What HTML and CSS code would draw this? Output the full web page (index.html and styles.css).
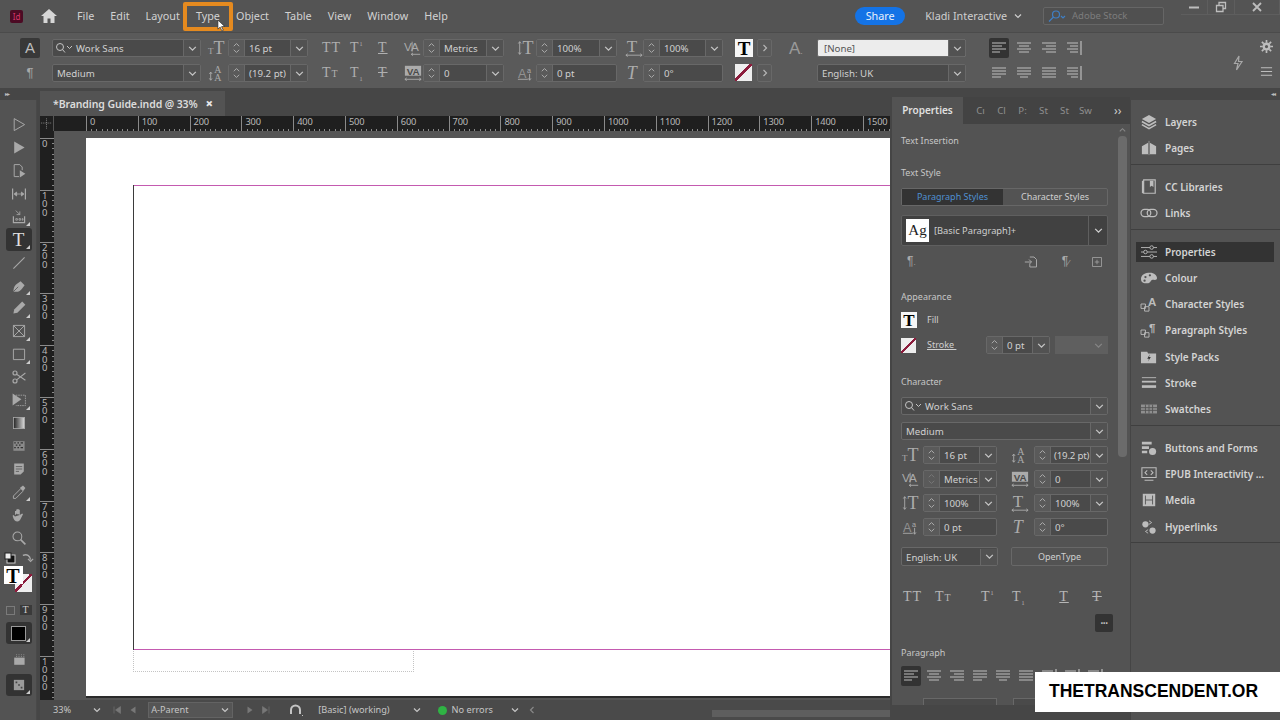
FILE: index.html
```html
<!DOCTYPE HTML>
<html lang="en">
  <head>
    <title>Branding Guide.indd @ 33%</title>
    <meta charset="utf-8">
    <link rel="stylesheet" href="styles.css">
  </head>
  <body>

  <svg class="sprite" width="0" height="0">
    <defs>
      <linearGradient id="grad" x1="0" x2="1" y1="0" y2="0"><stop offset="0" stop-color="#222"/><stop offset="1" stop-color="#ddd"/></linearGradient>
    </defs>
    <symbol id="chev" viewBox="0 0 10 10"><path d="M2 3.500l3 3 3-3" fill="none" stroke="currentColor" stroke-width="1.200"/></symbol>
    <symbol id="spin" viewBox="0 0 12 18"><path d="M3 7l3-3 3 3M3 11l3 3 3-3" fill="none" stroke="currentColor" stroke-width="1"/></symbol>
    <symbol id="right" viewBox="0 0 10 10"><path d="M3.500 2l3 3-3 3" fill="none" stroke="currentColor" stroke-width="1.200"/></symbol>
    <symbol id="al-l" viewBox="0 0 20 14"><path d="M3 2h14M3 5h10M3 8h14M3 11h8" stroke="currentColor" stroke-width="1.200"/></symbol>
    <symbol id="al-c" viewBox="0 0 20 14"><path d="M3 2h14M5 5h10M3 8h14M5 11h10" stroke="currentColor" stroke-width="1.200"/></symbol>
    <symbol id="al-r" viewBox="0 0 20 14"><path d="M3 2h14M7 5h10M3 8h14M7 11h10" stroke="currentColor" stroke-width="1.200"/></symbol>
    <symbol id="al-s" viewBox="0 0 20 14"><path d="M3 2h11M6 5h8M3 8h11M6 11h8M17 0v14" stroke="currentColor" stroke-width="1.200"/></symbol>
    <symbol id="al-j" viewBox="0 0 20 14"><path d="M3 2h14M3 5h14M3 8h14M3 11h9" stroke="currentColor" stroke-width="1.200"/></symbol>
    <symbol id="al-k" viewBox="0 0 20 14"><path d="M3 2h14M3 5h14M3 8h14M6 11h8" stroke="currentColor" stroke-width="1.200"/></symbol>
    <symbol id="al-a" viewBox="0 0 20 14"><path d="M3 2h14M3 5h14M3 8h14M3 11h14" stroke="currentColor" stroke-width="1.200"/></symbol>
    <symbol id="al-t" viewBox="0 0 20 14"><path d="M3 2h11M3 5h11M3 8h11M7 11h7M17 0v14" stroke="currentColor" stroke-width="1.200"/></symbol>
  </svg>

  <div class="app">

    <div class="menubar">
      <span class="app-icon">Id</span>
      <svg class="home" viewBox="0 0 18 16"><path d="M9 1L1 8h2.500v7h4v-4.500h3V15h4V8H17z" fill="currentColor"/></svg>
      <nav class="menu">
        <span>File</span><span>Edit</span><span>Layout</span>
        <span class="menu-hi">Type
          <svg class="cursor" viewBox="0 0 10 14"><path d="M1 1v10l2.500-2.200L5.500 13l1.500-.7-2-4 3.500-.3z" fill="#fff" stroke="#222" stroke-width=".7"/></svg>
        </span>
        <span>Object</span><span>Table</span><span>View</span><span>Window</span><span>Help</span>
      </nav>
      <span class="share">Share</span>
      <span class="user">Kladi Interactive</span>
      <svg class="user-chev"><use href="#chev"/></svg>
      <div class="stock">
        <svg class="stock-ic" viewBox="0 0 20 14"><circle cx="9" cy="5.500" r="3.500" fill="none" stroke="#3f7fc4" stroke-width="1.200"/><path d="M6.500 8L2 12.500M14 7l2 2 2-2" fill="none" stroke="#3f7fc4" stroke-width="1.200"/></svg>
        <span>Adobe Stock</span>
      </div>
      <div class="win">
        <span class="win-b"><svg viewBox="0 0 12 12"><path d="M1 6.500h10" stroke="currentColor" stroke-width="2"/></svg></span>
        <span class="win-b"><svg viewBox="0 0 12 12"><path d="M1.500 4.500h6.500v6H1.500zM4 4.500V1.500h6.500v6H8" fill="none" stroke="currentColor" stroke-width="1.300"/></svg></span>
        <span class="win-b win-x"><svg viewBox="0 0 12 12"><path d="M2 2l8 8M10 2l-8 8" stroke="currentColor" stroke-width="1.800"/></svg></span>
      </div>
    </div>

    <div class="control">
      <div class="col c-a">
        <span class="mode">A</span>
        <span class="para-mode">¶</span>
      </div>
      <div class="col c-font">
        <div class="box"><svg class="find" viewBox="0 0 20 12"><circle cx="5" cy="5" r="3.500" fill="none" stroke="currentColor"/><path d="M7.500 7.500L10 10.500M12 4l2.500 2.500L17 4" fill="none" stroke="currentColor"/></svg><span class="val">Work Sans</span><span class="dd"><svg><use href="#chev"/></svg></span></div>
        <div class="box"><span class="val">Medium</span><span class="dd"><svg><use href="#chev"/></svg></span></div>
      </div>
      <div class="col c-ic1">
        <svg class="ty" viewBox="0 0 22 20"><text x="1" y="17" font-size="10" class="st">T</text><text x="7" y="17" font-size="20" class="st">T</text></svg>
        <svg class="ty" viewBox="0 0 22 20"><path d="M4 9v9M2.500 11l1.500-2 1.500 2M2.500 16l1.500 2 1.500-2" fill="none" stroke="currentColor"/><text x="8" y="10" font-size="11" class="st">A</text><text x="8" y="19" font-size="11" class="st">A</text></svg>
      </div>
      <div class="col c-f1">
        <div class="box"><span class="sp"><svg><use href="#spin"/></svg></span><span class="val">16 pt</span><span class="dd"><svg><use href="#chev"/></svg></span></div>
        <div class="box"><span class="sp"><svg><use href="#spin"/></svg></span><span class="val">(19.2 pt)</span><span class="dd"><svg><use href="#chev"/></svg></span></div>
      </div>
      <div class="col c-let">
        <div class="letters"><span>TT</span><span>T<sup>1</sup></span><span class="ul">T</span></div>
        <div class="letters"><span>T<small>T</small></span><span>T<sub>1</sub></span><span class="st-through">T</span></div>
      </div>
      <div class="col c-ic2">
        <svg class="ty" viewBox="0 0 22 20"><text x="1" y="13" font-size="13" class="ss">VA</text><path d="M9 17h10M9 17l2-1.500M9 17l2 1.500M10 3v11" fill="none" stroke="currentColor"/></svg>
        <svg class="ty" viewBox="0 0 22 20"><rect x="2" y="2" width="18" height="11" fill="currentColor"/><text x="4" y="12" font-size="11" fill="#4a4a4a" class="sb">VA</text><path d="M2 17h18M2 17l2-1.500M2 17l2 1.500M20 17l-2-1.500M20 17l-2 1.500" fill="none" stroke="currentColor"/></svg>
      </div>
      <div class="col c-f2">
        <div class="box"><span class="sp"><svg><use href="#spin"/></svg></span><span class="val">Metrics</span><span class="dd"><svg><use href="#chev"/></svg></span></div>
        <div class="box"><span class="sp"><svg><use href="#spin"/></svg></span><span class="val">0</span><span class="dd"><svg><use href="#chev"/></svg></span></div>
      </div>
      <div class="col c-ic3">
        <svg class="ty" viewBox="0 0 22 20"><path d="M4 3v14M2.500 5l1.500-2 1.500 2M2.500 15l1.500 2 1.500-2" fill="none" stroke="currentColor"/><text x="7" y="17" font-size="20" class="st">T</text></svg>
        <svg class="ty" viewBox="0 0 22 20"><text x="2" y="16" font-size="14" class="ss" opacity=".7">A</text><text x="12" y="10" font-size="8" class="ss">a</text><path d="M2 17h11M15 11v7M13.500 16l1.500 2 1.500-2" fill="none" stroke="currentColor"/></svg>
      </div>
      <div class="col c-f2">
        <div class="box"><span class="sp"><svg><use href="#spin"/></svg></span><span class="val">100%</span><span class="dd"><svg><use href="#chev"/></svg></span></div>
        <div class="box"><span class="sp"><svg><use href="#spin"/></svg></span><span class="val">0 pt</span></div>
      </div>
      <div class="col c-ic4">
        <svg class="ty" viewBox="0 0 22 20"><text x="3" y="14" font-size="19" class="st">T</text><path d="M2 18h18M2 18l2-1.500M2 18l2 1.500M20 18l-2-1.500M20 18l-2 1.500" fill="none" stroke="currentColor"/></svg>
        <svg class="ty" viewBox="0 0 22 20"><text x="3" y="17" font-size="20" class="sti">T</text></svg>
      </div>
      <div class="col c-f3">
        <div class="box"><span class="sp"><svg><use href="#spin"/></svg></span><span class="val">100%</span><span class="dd"><svg><use href="#chev"/></svg></span></div>
        <div class="box"><span class="sp"><svg><use href="#spin"/></svg></span><span class="val">0°</span></div>
      </div>
      <div class="col c-sw">
        <span class="swatch-t">T</span>
        <span class="swatch-none"></span>
      </div>
      <div class="col c-ar">
        <span class="arrow-b"><svg><use href="#right"/></svg></span>
        <span class="arrow-b"><svg><use href="#right"/></svg></span>
      </div>
      <span class="c-big">A<small>.</small></span>
      <div class="col c-style">
        <div class="box none-box"><span class="val">[None]</span><span class="dd"><svg><use href="#chev"/></svg></span></div>
        <div class="box"><span class="val">English: UK</span><span class="dd"><svg><use href="#chev"/></svg></span></div>
      </div>
      <div class="col c-al">
        <div class="aligns"><span class="al al-on"><svg><use href="#al-l"/></svg></span><span class="al"><svg><use href="#al-c"/></svg></span><span class="al"><svg><use href="#al-r"/></svg></span><span class="al"><svg><use href="#al-s"/></svg></span></div>
        <div class="aligns"><span class="al"><svg><use href="#al-j"/></svg></span><span class="al"><svg><use href="#al-k"/></svg></span><span class="al"><svg><use href="#al-a"/></svg></span><span class="al"><svg><use href="#al-t"/></svg></span></div>
      </div>
      <svg class="bolt" viewBox="0 0 12 16"><path d="M7 1L2.500 8.500H6L4.500 15 10 6.500H6.500z" fill="none" stroke="currentColor" stroke-width="1.200"/></svg>
      <div class="col c-end">
        <svg viewBox="0 0 14 14"><circle cx="7" cy="7" r="3" fill="none" stroke="currentColor" stroke-width="2.500"/><path d="M7 0v3M7 11v3M0 7h3M11 7h3M2 2l2 2M10 10l2 2M12 2l-2 2M4 10l-2 2" stroke="currentColor" stroke-width="1.800"/></svg>
        <svg viewBox="0 0 14 14"><path d="M1 3h12M1 7h12M1 11h12" stroke="currentColor" stroke-width="1.100"/></svg>
      </div>
    </div>

    <div class="work">

      <div class="left">
        <div class="collapse">▸▸</div>
        <div class="tools">
          <span class="grip"></span>
          <span class="tool"><svg viewBox="0 0 20 20"><path d="M4 2l13 7.500-13 7.500z" fill="none" stroke="currentColor" stroke-width="1.200"/></svg></span>
          <span class="tool"><svg viewBox="0 0 20 20"><path d="M4 2l13 7.500-13 7.500z" fill="currentColor"/></svg></span>
          <span class="tool"><svg viewBox="0 0 20 20"><path d="M4 2h7l3 3v4M4 2v15h6" fill="none" stroke="currentColor" stroke-width="1.200"/><path d="M11 9l7 4.500-7 4.500z" fill="currentColor"/></svg></span>
          <span class="tool"><svg viewBox="0 0 20 20"><path d="M2 3v14M18 3v14" stroke="currentColor" stroke-width="1.500"/><path d="M4 10h12M4 10l3-2.500v5zM16 10l-3-2.500v5z" fill="currentColor" stroke="currentColor"/></svg></span>
          <span class="tool more"><svg viewBox="0 0 20 20"><path d="M3 9v8h14V9" fill="none" stroke="currentColor" stroke-width="1.500"/><path d="M6 12h2v2H6zM10 12h2v2h-2zM14 12h1v2h-1zM6 2l5 5M7 7h4V3" fill="none" stroke="currentColor"/></svg></span>
          <span class="tool tool-on more type-t">T</span>
          <span class="tool"><svg viewBox="0 0 20 20"><path d="M3 17L17 3" stroke="currentColor" stroke-width="1.300"/></svg></span>
          <span class="tool more"><svg viewBox="0 0 20 20"><path d="M3 17c0-5 2-8 5-10l4-3 5 5-3 4c-2 3-5 5-11 4z" fill="currentColor"/><path d="M3 17l6-6" stroke="#535353"/></svg></span>
          <span class="tool more"><svg viewBox="0 0 20 20"><path d="M3 17l1-5L14 2l4 4L8 16z" fill="currentColor"/></svg></span>
          <span class="tool more"><svg viewBox="0 0 20 20"><path d="M3 3h14v14H3zM3 3l14 14M17 3L3 17" fill="none" stroke="currentColor" stroke-width="1.200"/></svg></span>
          <span class="tool more"><svg viewBox="0 0 20 20"><path d="M3 4h14v13H3z" fill="none" stroke="currentColor" stroke-width="1.200"/></svg></span>
          <span class="tool"><svg viewBox="0 0 20 20"><circle cx="5" cy="5" r="2.500" fill="none" stroke="currentColor" stroke-width="1.500"/><circle cx="5" cy="15" r="2.500" fill="none" stroke="currentColor" stroke-width="1.500"/><path d="M7 6.500L18 14M7 13.500L18 5" stroke="currentColor" stroke-width="1.300"/></svg></span>
          <span class="tool more"><svg viewBox="0 0 20 20"><path d="M6 4h12v13H6" fill="none" stroke="currentColor" stroke-dasharray="2 1"/><path d="M2 2l11 7-11 8z" fill="currentColor"/></svg></span>
          <span class="tool"><svg viewBox="0 0 20 20"><rect x="3" y="3" width="14" height="14" fill="url(#grad)" stroke="#aaa"/></svg></span>
          <span class="tool"><svg viewBox="0 0 20 20"><rect x="3" y="4" width="14" height="12" fill="#8a8a8a"/><path d="M4 6h2M8 6h2M12 6h3M6 9h2M10 9h2M4 12h2M8 12h2M12 12h3" stroke="#333" stroke-width="1.500"/></svg></span>
          <span class="tool"><svg viewBox="0 0 20 20"><path d="M4 3h12v10l-4 4H4z" fill="currentColor"/><path d="M6 7h8M6 10h8M6 13h4" stroke="#535353"/></svg></span>
          <span class="tool more"><svg viewBox="0 0 20 20"><path d="M12 6L3 15v3h3l9-9" fill="none" stroke="currentColor" stroke-width="1.200"/><path d="M11 5l4-3 3 3-3 4z" fill="currentColor"/></svg></span>
          <span class="tool"><svg viewBox="0 0 20 20"><path d="M5 10V5h1.500v4M6.500 8V3H8v6M8 9V2.500h1.500V9M9.500 9V3.500H11V10M11 10l3-2 1 1-3 6c-1 2-2 3-4 3-3 0-4-2-5-4l-1-3 1-1 2 2z" fill="currentColor"/></svg></span>
          <span class="tool"><svg viewBox="0 0 20 20"><circle cx="8" cy="8" r="5.500" fill="none" stroke="currentColor" stroke-width="1.300"/><path d="M12 12l6 6" stroke="currentColor" stroke-width="2"/></svg></span>
          <div class="swaprow">
            <svg viewBox="0 0 12 12"><rect x="3" y="3" width="8" height="8" fill="#111" stroke="#ccc"/><rect x="1" y="1" width="6" height="6" fill="#eee" stroke="#222"/></svg>
            <svg viewBox="0 0 14 14"><path d="M1 4c5-2 8 0 9 5M7 8l3 3 3-3" fill="none" stroke="currentColor" stroke-width="1.500"/></svg>
          </div>
          <div class="fillstroke">
            <span class="fs-stroke"></span>
            <span class="fs-fill">T</span>
          </div>
          <div class="swaprow small">
            <span class="mini-box"></span>
            <span class="mini-t">T</span>
          </div>
          <span class="tool-on tool-box more"><span class="black-sq"></span></span>
          <span class="tool tool-plain"><svg viewBox="0 0 20 20"><rect x="4" y="7" width="13" height="9" fill="currentColor"/><path d="M7 3v3M10 3v3M13 3v3M16 3v3" stroke="currentColor" stroke-dasharray="1 1"/></svg></span>
          <span class="tool-on tool-box more view-box"><svg viewBox="0 0 14 14"><rect x="1" y="1" width="12" height="12" fill="#9a9a9a"/><path d="M3 3h2v2H3zM6 6h2v2H6zM9 9h2v2H9z" fill="#444"/></svg></span>
        </div>
      </div>

      <div class="doc">
        <div class="doc-tabs">
          <span class="doc-tab">*Branding Guide.indd @ 33%<b>×</b></span>
        </div>
        <div class="h-ruler">
          <span class="corner"><svg viewBox="0 0 14 15"><path d="M7 2v11M1 7h12" stroke="#8a8a8a" stroke-dasharray="1 1"/></svg></span>
          <span class="h-gap"></span>
          <span class="h-cell">0</span><span class="h-cell">100</span><span class="h-cell">200</span><span class="h-cell">300</span>
          <span class="h-cell">400</span><span class="h-cell">500</span><span class="h-cell">600</span><span class="h-cell">700</span>
          <span class="h-cell">800</span><span class="h-cell">900</span><span class="h-cell">1000</span><span class="h-cell">1100</span>
          <span class="h-cell">1200</span><span class="h-cell">1300</span><span class="h-cell">1400</span><span class="h-cell">1500</span>
        </div>
        <div class="doc-mid">
          <div class="v-ruler">
            <span class="v-gap"></span>
            <span class="v-cell">0</span>
            <span class="v-cell">1<br>0<br>0</span>
            <span class="v-cell">2<br>0<br>0</span>
            <span class="v-cell">3<br>0<br>0</span>
            <span class="v-cell">4<br>0<br>0</span>
            <span class="v-cell">5<br>0<br>0</span>
            <span class="v-cell">6<br>0<br>0</span>
            <span class="v-cell">7<br>0<br>0</span>
            <span class="v-cell">8<br>0<br>0</span>
            <span class="v-cell">9<br>0<br>0</span>
            <span class="v-cell">1<br>0<br>0<br>0</span>
          </div>
          <div class="board">
            <div class="page">
              <div class="margins"></div>
              <div class="slug"></div>
            </div>
          </div>
        </div>
        <div class="status">
          <span class="st-zoom">33%</span>
          <svg class="st-chev"><use href="#chev"/></svg>
          <svg class="st-nav first" viewBox="0 0 10 10"><path d="M2 1.500v7M8.500 1.500v7L3.500 5z" fill="#777" stroke="#777" stroke-width=".6"/></svg>
          <svg class="st-nav" viewBox="0 0 10 10"><path d="M7.500 1.500v7L2.500 5z" fill="#777"/></svg>
          <div class="st-page"><span>A-Parent</span><svg><use href="#chev"/></svg></div>
          <svg class="st-nav" viewBox="0 0 10 10"><path d="M2.500 1.500v7L7.500 5z" fill="#777"/></svg>
          <svg class="st-nav" viewBox="0 0 10 10"><path d="M1.500 1.500v7L6.500 5zM8 1.500v7" fill="#777" stroke="#777" stroke-width=".6"/></svg>
          <svg class="st-arc" viewBox="0 0 16 14"><path d="M2 11V7a4.500 4.500 0 0 1 9 0v4" fill="none" stroke="#c4c4c4" stroke-width="2"/><path d="M13.500 12v1" stroke="#c4c4c4"/></svg>
          <span class="st-prof">[Basic] (working)</span>
          <svg class="st-chev2"><use href="#chev"/></svg>
          <span class="st-dot"></span>
          <span class="st-err">No errors</span>
          <svg class="st-chev3"><use href="#chev"/></svg>
          <svg class="st-back"><use href="#right"/></svg>
          <span class="st-thumb"></span>
        </div>
      </div>

      <div class="panel-col">
        <div class="panel">
          <div class="panel-tabs">
            <span class="ptab-on">Properties</span>
            <span class="ptab">Cı</span><span class="ptab">Cl</span><span class="ptab">P:</span><span class="ptab">St</span><span class="ptab">St</span><span class="ptab">Sw</span>
            <span class="ptab-more">››</span>
          </div>
          <div class="panel-body">
            <div class="props">
              <div class="ph">Text Insertion</div>
              <div class="ph ph-ts">Text Style</div>
              <div class="seg"><span class="seg-on">Paragraph Styles</span><span>Character Styles</span></div>
              <div class="style-dd">
                <span class="ag">Ag</span>
                <span class="style-name">[Basic Paragraph]+</span>
                <span class="style-chev"><svg><use href="#chev"/></svg></span>
              </div>
              <div class="style-acts">
                <span class="pil">¶<small>.</small></span>
                <svg class="act a1" viewBox="0 0 18 16"><path d="M7 2h5l3 3v9H7v-3" fill="none" stroke="currentColor" stroke-width="1.200"/><path d="M1 8h8M6 5l3 3-3 3" fill="none" stroke="currentColor" stroke-width="1.200"/></svg>
                <span class="pil a2">¶<small>⁄</small></span>
                <svg class="act a3" viewBox="0 0 16 16"><path d="M2 2h12v12H2z" fill="none" stroke="currentColor"/><path d="M8 5v6M5 8h6" stroke="currentColor"/></svg>
              </div>

              <div class="ph ph-app">Appearance</div>
              <div class="row-fill"><span class="swatch-t small-sw">T</span><span class="lbl">Fill</span></div>
              <div class="row-stroke">
                <span class="swatch-none small-none"></span>
                <span class="lbl link">Stroke </span>
                <div class="box w64"><span class="sp"><svg><use href="#spin"/></svg></span><span class="val">0 pt</span><span class="dd"><svg><use href="#chev"/></svg></span></div>
                <div class="dis"><svg><use href="#chev"/></svg></div>
              </div>

              <div class="ph ph-char">Character</div>
              <div class="box full"><svg class="find" viewBox="0 0 20 12"><circle cx="5" cy="5" r="3.500" fill="none" stroke="currentColor"/><path d="M7.500 7.500L10 10.500M12 4l2.500 2.500L17 4" fill="none" stroke="currentColor"/></svg><span class="val">Work Sans</span><span class="dd"><svg><use href="#chev"/></svg></span></div>
              <div class="box full mt7"><span class="val">Medium</span><span class="dd"><svg><use href="#chev"/></svg></span></div>

              <div class="char-grid">
                <svg class="ty" viewBox="0 0 22 20"><text x="1" y="17" font-size="10" class="st">T</text><text x="7" y="17" font-size="20" class="st">T</text></svg>
                <div class="box"><span class="sp"><svg><use href="#spin"/></svg></span><span class="val">16 pt</span><span class="dd"><svg><use href="#chev"/></svg></span></div>
                <svg class="ty ty-r" viewBox="0 0 22 20"><path d="M4 9v9M2.500 11l1.500-2 1.500 2M2.500 16l1.500 2 1.500-2" fill="none" stroke="currentColor"/><text x="8" y="10" font-size="11" class="st">A</text><text x="8" y="19" font-size="11" class="st">A</text></svg>
                <div class="box"><span class="sp"><svg><use href="#spin"/></svg></span><span class="val tight">(19.2 pt)</span><span class="dd"><svg><use href="#chev"/></svg></span></div>

                <svg class="ty" viewBox="0 0 22 20"><text x="1" y="13" font-size="13" class="ss">VA</text><path d="M9 17h10M9 17l2-1.500M9 17l2 1.500M10 3v11" fill="none" stroke="currentColor"/></svg>
                <div class="box"><span class="sp sp-dim"><svg><use href="#spin"/></svg></span><span class="val">Metrics</span><span class="dd"><svg><use href="#chev"/></svg></span></div>
                <svg class="ty ty-r" viewBox="0 0 22 20"><rect x="2" y="2" width="18" height="11" fill="currentColor"/><text x="4" y="12" font-size="11" fill="#4a4a4a" class="sb">VA</text><path d="M2 17h18M2 17l2-1.500M2 17l2 1.500M20 17l-2-1.500M20 17l-2 1.500" fill="none" stroke="currentColor"/></svg>
                <div class="box"><span class="sp"><svg><use href="#spin"/></svg></span><span class="val">0</span><span class="dd"><svg><use href="#chev"/></svg></span></div>

                <svg class="ty" viewBox="0 0 22 20"><path d="M4 3v14M2.500 5l1.500-2 1.500 2M2.500 15l1.500 2 1.500-2" fill="none" stroke="currentColor"/><text x="7" y="17" font-size="20" class="st">T</text></svg>
                <div class="box"><span class="sp"><svg><use href="#spin"/></svg></span><span class="val">100%</span><span class="dd"><svg><use href="#chev"/></svg></span></div>
                <svg class="ty ty-r" viewBox="0 0 22 20"><text x="3" y="14" font-size="19" class="st">T</text><path d="M2 18h18M2 18l2-1.500M2 18l2 1.500M20 18l-2-1.500M20 18l-2 1.500" fill="none" stroke="currentColor"/></svg>
                <div class="box"><span class="sp"><svg><use href="#spin"/></svg></span><span class="val">100%</span><span class="dd"><svg><use href="#chev"/></svg></span></div>

                <svg class="ty" viewBox="0 0 22 20"><text x="2" y="16" font-size="14" class="ss" opacity=".7">A</text><text x="12" y="10" font-size="8" class="ss">a</text><path d="M2 17h11M15 11v7M13.500 16l1.500 2 1.500-2" fill="none" stroke="currentColor"/></svg>
                <div class="box"><span class="sp"><svg><use href="#spin"/></svg></span><span class="val">0 pt</span></div>
                <svg class="ty ty-r" viewBox="0 0 22 20"><text x="3" y="17" font-size="20" class="sti">T</text></svg>
                <div class="box"><span class="sp"><svg><use href="#spin"/></svg></span><span class="val">0°</span></div>
              </div>

              <div class="lang-row">
                <div class="box lang"><span class="val">English: UK</span><span class="dd"><svg><use href="#chev"/></svg></span></div>
                <span class="opentype">OpenType</span>
              </div>

              <div class="case-row">
                <span class="c1">TT</span><span class="c2">T<small>T</small></span><span class="c3">T<sup>1</sup></span><span class="c4">T<sub>1</sub></span><span class="c5 ul">T</span><span class="c6 st-through">T</span>
              </div>
              <div class="more-row"><span class="more-b">•••</span></div>

              <div class="ph ph-para">Paragraph</div>
              <div class="p-aligns">
                <span class="al al-on"><svg><use href="#al-l"/></svg></span><span class="al"><svg><use href="#al-c"/></svg></span><span class="al"><svg><use href="#al-r"/></svg></span><span class="al"><svg><use href="#al-j"/></svg></span><span class="al"><svg><use href="#al-k"/></svg></span><span class="al"><svg><use href="#al-a"/></svg></span><span class="al"><svg><use href="#al-t"/></svg></span><span class="al"><svg><use href="#al-s"/></svg></span><span class="al"><svg><use href="#al-s"/></svg></span>
              </div>
              <div class="p-indent"><span class="indent-box"></span><span class="indent-box"></span></div>
            </div>
            <div class="scroll">
              <svg class="scroll-up"><use href="#chev"/></svg>
              <span class="scroll-thumb"></span>
            </div>
          </div>
        </div>
      </div>

      <div class="dock-col">
        <div class="dock-top">◂◂</div>
        <div class="dock">
          <div class="dock-group g1">
            <div class="d-item"><svg viewBox="0 0 20 18"><path d="M10 1l8 4.500-8 4.500-8-4.500z" fill="currentColor"/><path d="M2 8.500l8 4.500 8-4.500M2 12l8 4.500 8-4.500" fill="none" stroke="currentColor" stroke-width="1.800"/></svg>Layers</div>
            <div class="d-item"><svg viewBox="0 0 20 18"><path d="M2 7l7-4v13H2zM11 3l7 4v9h-7z" fill="currentColor"/><path d="M10 1v16" stroke="currentColor" stroke-width=".7"/></svg>Pages</div>
          </div>
          <div class="dock-group g2">
            <div class="d-item"><svg viewBox="0 0 20 18"><path d="M2 2h2v14H2z" fill="currentColor"/><path d="M4 1h13v15H4z" fill="none" stroke="currentColor" stroke-width="1.300"/><path d="M11 2h4v7l-2-1.500L11 9z" fill="currentColor"/></svg>CC Libraries</div>
            <div class="d-item"><svg viewBox="0 0 20 18"><rect x="1" y="5" width="11" height="8" rx="4" fill="none" stroke="currentColor" stroke-width="1.400"/><rect x="8" y="5" width="11" height="8" rx="4" fill="none" stroke="currentColor" stroke-width="1.400"/></svg>Links</div>
          </div>
          <div class="dock-group g3">
            <div class="d-item d-on"><svg viewBox="0 0 20 18"><path d="M1 4h10M15 4h4M1 9h3M8 9h11M1 14h10M15 14h4" stroke="currentColor"/><circle cx="13" cy="4" r="2" fill="none" stroke="currentColor"/><circle cx="6" cy="9" r="2" fill="none" stroke="currentColor"/><circle cx="13" cy="14" r="2" fill="none" stroke="currentColor"/></svg>Properties</div>
            <div class="d-item"><svg viewBox="0 0 20 18"><path d="M1 10c0-5 5-7 10-7s8 3 8 6-3 2-5 2-2 4-6 4-7-1-7-5z" fill="currentColor"/><circle cx="6" cy="8" r="1.300" fill="#535353"/><circle cx="11" cy="6" r="1.300" fill="#535353"/><circle cx="5" cy="12" r="1.300" fill="#535353"/></svg>Colour</div>
            <div class="d-item"><svg viewBox="0 0 20 18"><path d="M1 9h5v5H1zM5 12h5v5H5z" fill="none" stroke="currentColor"/><text x="9" y="11" font-size="13" class="ss">A</text></svg>Character Styles</div>
            <div class="d-item"><svg viewBox="0 0 20 18"><path d="M1 9h5v5H1zM5 12h5v5H5z" fill="none" stroke="currentColor"/><text x="10" y="11" font-size="13" class="ss">¶</text></svg>Paragraph Styles</div>
            <div class="d-item"><svg viewBox="0 0 20 18"><path d="M1 3h7l1 2h9v11H1z" fill="currentColor"/><path d="M11 6l-3 5h2l-1 3 3-5h-2z" fill="#333"/></svg>Style Packs</div>
            <div class="d-item"><svg viewBox="0 0 20 18"><path d="M2 3h16" stroke="currentColor"/><path d="M2 7.500h16" stroke="currentColor" stroke-width="2"/><path d="M2 13h16" stroke="currentColor" stroke-width="3"/></svg>Stroke</div>
            <div class="d-item"><svg viewBox="0 0 20 18"><rect x="1" y="4" width="18" height="10" fill="#8f8f8f"/><path d="M1 7.500h18M1 10.500h18M6 4v10M10 4v10M14 4v10" stroke="#535353"/></svg>Swatches</div>
          </div>
          <div class="dock-group g4">
            <div class="d-item"><svg viewBox="0 0 20 18"><path d="M2 2h11v3H2zM2 7h8v3H2zM2 12h6v3H2z" fill="currentColor"/><circle cx="14" cy="13" r="4" fill="currentColor"/></svg>Buttons and Forms</div>
            <div class="d-item"><svg viewBox="0 0 20 18"><path d="M2 2h16v11H2z" fill="none" stroke="currentColor" stroke-width="1.200"/><path d="M8 5L5.500 7.500 8 10M12 5l2.500 2.500L12 10M5 16h10" fill="none" stroke="currentColor" stroke-width="1.200"/></svg>EPUB Interactivity ...</div>
            <div class="d-item"><svg viewBox="0 0 20 18"><rect x="3" y="2" width="14" height="14" fill="currentColor"/><path d="M6 4v10M14 4v10M6 9h8" stroke="#535353"/></svg>Media</div>
            <div class="d-item"><svg viewBox="0 0 20 18"><circle cx="6" cy="6" r="3.500" fill="currentColor"/><circle cx="14" cy="13" r="3.500" fill="currentColor"/><path d="M10 2l3 2-3 2M9 16l-3-2 3-2" fill="none" stroke="currentColor"/></svg>Hyperlinks</div>
          </div>
        </div>
      </div>
    </div>

    <div class="watermark">THETRANSCENDENT.OR</div>
  </div>

  </body>
</html>
```

FILE: styles.css
```css
html {
  height: 100%;
}
body {
  margin: 0;
  padding: 0;
  background: #535353;
  color: #cfcfcf;
  font-family: "Noto Sans", "Open Sans", sans-serif;
  font-size: 9.700px;
  line-height: 14px;
}

svg {
  display: block;
}
.sprite {
  position: absolute;
}
.st { font-family: "Liberation Serif", serif; fill: currentColor; }
.sti { font-family: "Liberation Serif", serif; font-style: italic; fill: currentColor; }
.ss { font-family: "Liberation Sans", sans-serif; fill: currentColor; }
.sb { font-family: "Liberation Sans", sans-serif; font-weight: bold; }

.app {
  position: relative;
  width: 1280px;
  height: 720px;
  overflow: hidden;
  display: flex;
  flex-direction: column;
}

/* menu bar */
.menubar {
  height: 32px;
  flex: none;
  display: flex;
  align-items: center;
  background: #545454;
  font-size: 10.800px;
  white-space: nowrap;
}
.app-icon {
  width: 13px;
  height: 13px;
  margin-left: 10px;
  border-radius: 2px;
  background: #4c0b24;
  color: #d8366c;
  font-size: 8px;
  line-height: 13px;
  text-align: center;
}
.home {
  width: 18px;
  height: 16px;
  margin-left: 17px;
  color: #d6d6d6;
}
.menu {
  display: flex;
  gap: 16px;
  margin-left: 19px;
  color: #d2d2d2;
}
.menu-hi {
  position: relative;
}
.menu-hi::after {
  content: "";
  position: absolute;
  left: -13px;
  right: -13px;
  top: -7px;
  bottom: -8px;
  border: 4px solid #e58a1f;
  border-radius: 2px;
}
.cursor {
  position: absolute;
  left: 21px;
  top: 10px;
  width: 9px;
  height: 13px;
  z-index: 2;
}
.share {
  width: 50px;
  height: 18px;
  margin-left: auto;
  border-radius: 9px;
  background: #1473e6;
  color: #e8f0fb;
  line-height: 18px;
  text-align: center;
}
.user {
  margin-left: 20px;
  color: #cfcfcf;
}
.user-chev {
  width: 10px;
  height: 10px;
  margin-left: 6px;
}
.stock {
  width: 121px;
  height: 18px;
  margin-left: 20px;
  display: flex;
  align-items: center;
  border: 1px solid #666;
  border-radius: 2px;
  box-sizing: border-box;
  background: #505050;
  color: #7d7d7d;
  font-size: 9.500px;
}
.stock-ic {
  width: 20px;
  height: 14px;
  margin: 0 5px 0 3px;
}
.win {
  display: flex;
  align-self: flex-start;
  margin-left: 17px;
  color: #bdbdbd;
}
.win-b {
  width: 27px;
  height: 15px;
  border: 1px solid #5e5e5e;
  border-top: 0;
  border-left: 0;
  display: flex;
  align-items: center;
  justify-content: center;
  box-sizing: border-box;
}
.win-b svg {
  width: 12px;
  height: 12px;
}
.win-x {
  width: 45px;
}

/* control panel */
.control {
  height: 56px;
  flex: none;
  box-sizing: border-box;
  padding: 6px 0 0 20px;
  display: flex;
  background: #5a5a5a;
  border-top: 1px solid #4b4b4b;
}
.col {
  display: flex;
  flex-direction: column;
  gap: 7px;
  flex: none;
}
.c-a { width: 20px; }
.c-font { width: 149px; margin-left: 12px; }
.c-ic1 { width: 22px; margin-left: 5px; }
.c-f1 { width: 80px; }
.c-let { width: 68px; margin-left: 14px; }
.c-ic2 { width: 20px; margin-left: 12px; }
.c-f2 { width: 81px; margin-left: 1px; }
.c-ic3 { width: 20px; margin-left: 11px; }
.c-ic4 { width: 20px; margin-left: 6px; }
.c-f3 { width: 80px; }
.c-sw { width: 18px; margin-left: 12px; }
.c-ar { width: 15px; margin-left: 4px; }
.c-big {
  width: 18px;
  margin-left: 17px;
  color: #9a9a9a;
  font: 17px/20px "Liberation Sans", sans-serif;
  flex: none;
}
.c-big small { font-size: 9px; }
.c-style { width: 149px; margin-left: 10px; }
.c-al { width: 96px; margin-left: 23px; }
.bolt {
  width: 12px;
  height: 16px;
  margin: 16px 0 0 147px;
  color: #a8a8a8;
}
.c-end {
  margin-left: 16px;
  gap: 11px;
  color: #bdbdbd;
}
.c-end svg {
  width: 13px;
  height: 13px;
  margin-top: 1px;
}
.mode {
  height: 20px;
  margin-top: -1px;
  background: #383838;
  border-radius: 2px;
  text-align: center;
  font: 15px/20px "Liberation Sans", sans-serif;
  color: #bdbdbd;
}
.para-mode {
  margin-top: -1px;
  height: 18px;
  text-align: center;
  font: 13px/18px "Liberation Sans", sans-serif;
  color: #a8a8a8;
}

.box {
  height: 18px;
  box-sizing: border-box;
  display: flex;
  align-items: center;
  border: 1px solid #686868;
  border-radius: 2px;
  background: #4a4a4a;
  color: #d0d0d0;
}
.val {
  flex: 1;
  padding: 2px 0 0 4px;
  white-space: nowrap;
  overflow: hidden;
}
.tight {
  letter-spacing: -.2px;
  padding-left: 3px;
}
.dd {
  width: 16px;
  height: 16px;
  flex: none;
  border-left: 1px solid #686868;
  background: #525252;
  display: flex;
  align-items: center;
  justify-content: center;
  color: #c4c4c4;
}
.dd svg {
  width: 11px;
  height: 11px;
}
.sp {
  width: 15px;
  height: 16px;
  flex: none;
  border-right: 1px solid #686868;
  background: #5a5a5a;
  color: #b4b4b4;
}
.sp svg {
  width: 15px;
  height: 16px;
}
.sp-dim {
  color: #7a7a7a;
}
.find {
  width: 20px;
  height: 12px;
  margin-left: 2px;
  flex: none;
  color: #c4c4c4;
}
.find + .val {
  padding-left: 1px;
}
.ty {
  width: 22px;
  height: 18px;
  color: #ababab;
  overflow: visible;
}
.letters {
  height: 18px;
  display: flex;
  gap: 10px;
  font: 14px/18px "Liberation Serif", serif;
  color: #b0b0b0;
}
.letters span {
  min-width: 18px;
  letter-spacing: 1px;
}
.letters small { font-size: 10px; }
sup, sub {
  font-size: 6px;
  line-height: 0;
}
.ul { text-decoration: underline; }
.st-through { text-decoration: line-through; }
.swatch-t {
  display: block;
  width: 18px;
  height: 18px;
  background: #f6f6f6;
  color: #000;
  text-align: center;
  font: bold 19px/19px "Liberation Serif", serif;
}
.swatch-none {
  display: block;
  width: 17px;
  height: 17px;
  background: linear-gradient(to top left, #eee 46%, #8c1c3c 46%, #8c1c3c 56%, #eee 56%);
}
.arrow-b {
  height: 18px;
  box-sizing: border-box;
  border: 1px solid #686868;
  border-radius: 2px;
  display: flex;
  align-items: center;
  justify-content: center;
  color: #b4b4b4;
}
.arrow-b svg {
  width: 10px;
  height: 10px;
}
.none-box {
  background: #ececec;
  color: #555;
}
.none-box .val {
  padding-left: 6px;
}
.aligns {
  display: flex;
  height: 18px;
  gap: 5px;
}
.al {
  width: 20px;
  height: 20px;
  flex: none;
  display: flex;
  align-items: center;
  justify-content: center;
  margin-top: -1px;
  color: #bdbdbd;
}
.al svg {
  width: 20px;
  height: 14px;
}
.al-on {
  background: #333;
  border-radius: 2px;
}

/* work area */
.work {
  flex: 1;
  display: flex;
  min-height: 0;
  background: #464646;
}
.left {
  width: 40px;
  flex: none;
  display: flex;
  flex-direction: column;
}
.collapse {
  height: 12px;
  padding-left: 5px;
  font-size: 6px;
  line-height: 12px;
  letter-spacing: -1px;
  color: #bdbdbd;
}
.tools {
  flex: 1;
  width: 37px;
  background: #535353;
  color: #a9a9a9;
  display: flex;
  flex-direction: column;
  align-items: center;
  box-shadow: inset -1px 0 0 #494949;
}
.grip {
  display: block;
  height: 13.500px;
}
.tool {
  position: relative;
  width: 26px;
  height: 22.940px;
  display: flex;
  align-items: center;
  justify-content: center;
  flex: none;
}
.tool svg {
  width: 16px;
  height: 16px;
}
.tool-on {
  background: #333;
  border-radius: 3px;
}
.more::after {
  content: "";
  position: absolute;
  right: 2px;
  bottom: 2px;
  border: 2px solid transparent;
  border-right-color: #ccc;
  border-bottom-color: #ccc;
}
.type-t {
  color: #e0e0e0;
  font: 19px/21px "Liberation Serif", serif;
}
.swaprow {
  width: 30px;
  height: 14px;
  margin-top: 2px;
  display: flex;
  justify-content: space-between;
  align-items: center;
}
.swaprow svg {
  width: 12px;
  height: 12px;
}
.swaprow.small {
  margin-top: 10px;
  width: 26px;
}
.fillstroke {
  position: relative;
  width: 30px;
  height: 27px;
  margin-top: 1px;
}
.fs-fill {
  position: absolute;
  left: 0;
  top: 0;
  width: 19px;
  height: 18px;
  background: #fff;
  color: #000;
  text-align: center;
  font: bold 20px/20px "Liberation Serif", serif;
}
.fs-stroke {
  position: absolute;
  left: 11px;
  top: 8px;
  width: 17px;
  height: 18px;
  background: linear-gradient(to top left, #eee 46%, #8c1c3c 46%, #8c1c3c 56%, #eee 56%);
}
.mini-box {
  width: 7px;
  height: 7px;
  border: 1px solid #7a7a7a;
}
.mini-t {
  width: 12px;
  height: 10px;
  background: #3a3a3a;
  text-align: center;
  font: 10px/10px "Liberation Serif", serif;
  color: #ccc;
}
.tool-box {
  position: relative;
  flex: none;
  width: 26px;
  height: 22px;
  margin-top: 5px;
  display: flex;
  align-items: center;
  justify-content: center;
}
.black-sq {
  width: 13px;
  height: 13px;
  background: #000;
  border: 1px solid #999;
}
.tool-plain {
  margin-top: 4px;
}
.view-box {
  margin-top: 3px;
}
.view-box svg {
  width: 12px;
  height: 12px;
}

/* document */
.doc {
  width: 850px;
  flex: none;
  display: flex;
  flex-direction: column;
}
.doc-tabs {
  height: 28px;
  flex: none;
  display: flex;
  align-items: flex-end;
}
.doc-tab {
  width: 185px;
  height: 25px;
  box-sizing: border-box;
  padding-left: 13px;
  background: #535353;
  color: #dcdcdc;
  font-size: 10.500px;
  line-height: 25px;
  font-weight: 600;
  letter-spacing: -.1px;
  white-space: nowrap;
}
.doc-tab b {
  margin-left: 8px;
  font-size: 13px;
  color: #e8e8e8;
}
.h-ruler {
  height: 15px;
  flex: none;
  display: flex;
  overflow: hidden;
  background: #1f1f1f;
  background-image: repeating-linear-gradient(to right, #8a8a8a 0, #8a8a8a 1px, transparent 1px, transparent 5.180px);
  background-size: 100% 2px;
  background-repeat: no-repeat;
  background-position: 46px bottom;
}
.corner {
  width: 14px;
  flex: none;
  border-right: 1px solid #555;
  box-sizing: border-box;
}
.corner svg {
  width: 13px;
  height: 15px;
}
.h-gap {
  width: 32px;
  flex: none;
}
.h-cell {
  width: 51.800px;
  flex: none;
  box-sizing: border-box;
  padding-left: 3px;
  border-left: 1px solid #8a8a8a;
  color: #b8b8b8;
  font-size: 9.300px;
  line-height: 12px;
  letter-spacing: -.2px;
}
.doc-mid {
  flex: 1;
  min-height: 0;
  display: flex;
}
.v-ruler {
  width: 14px;
  flex: none;
  overflow: hidden;
  background: #1f1f1f;
  background-image: repeating-linear-gradient(to bottom, #8a8a8a 0, #8a8a8a 1px, transparent 1px, transparent 5.180px);
  background-size: 2px 100%;
  background-repeat: no-repeat;
  background-position: right 7px;
  box-sizing: border-box;
}
.v-gap {
  display: block;
  height: 7px;
}
.v-cell {
  display: block;
  height: 51.800px;
  box-sizing: border-box;
  padding: 1px 0 0 2px;
  border-top: 1px solid #8a8a8a;
  color: #b8b8b8;
  font-size: 9.500px;
  line-height: 8.500px;
}
.board {
  flex: 1;
  position: relative;
  background: #565656;
  overflow: hidden;
}
.page {
  position: absolute;
  left: 32px;
  top: 7px;
  width: 804px;
  height: 558px;
  background: #fff;
  box-shadow: 0 2px 0 #2b2b2b;
}
.margins {
  position: absolute;
  left: 47px;
  top: 47px;
  right: 0;
  height: 465px;
  box-sizing: border-box;
  border-left: 1px solid #3b3b3b;
}
.margins::before,
.margins::after {
  content: "";
  position: absolute;
  left: 0;
  right: 0;
  height: 1px;
  background: #c45ab0;
}
.margins::before { top: 0; }
.margins::after { bottom: 0; }
.slug {
  position: absolute;
  left: 47px;
  top: 513px;
  width: 281px;
  height: 21px;
  box-sizing: border-box;
  border: 1px dotted #c4c4c4;
  border-top: 0;
}

.status {
  height: 20px;
  flex: none;
  display: flex;
  align-items: center;
  background: #4a4a4a;
  color: #c6c6c6;
  font-size: 9.200px;
}
.st-zoom { margin-left: 13px; }
.st-chev { width: 10px; height: 10px; margin-left: 21px; }
.st-nav { width: 10px; height: 10px; margin-left: 6px; }
.st-nav.first { margin-left: 10px; }
.st-page {
  width: 85px;
  height: 16px;
  margin: 0 6px 0 10px;
  box-sizing: border-box;
  border: 1px solid #636363;
  background: #555;
  display: flex;
  align-items: center;
  justify-content: space-between;
  padding: 0 2px;
}
.st-page svg { width: 10px; height: 10px; }
.st-arc { width: 16px; height: 14px; margin-left: 18px; }
.st-prof { margin-left: 13px; }
.st-chev2 { width: 10px; height: 10px; margin-left: 22px; }
.st-dot {
  width: 9px;
  height: 9px;
  margin-left: 16px;
  border-radius: 50%;
  background: #2fb344;
}
.st-err { margin-left: 5px; }
.st-chev3 { width: 10px; height: 10px; margin-left: 17px; }
.st-back { width: 10px; height: 10px; margin-left: 7px; transform: scaleX(-1); color: #888; }
.st-thumb {
  width: 178px;
  height: 7px;
  margin: 6px 0 0 auto;
  background: #5e5e5e;
}

/* properties panel */
.panel-col {
  width: 240px;
  flex: none;
  padding-top: 9px;
}
.panel {
  height: 608px;
  overflow: hidden;
  background: #535353;
  border-left: 2px solid #454545;
  box-sizing: border-box;
}
.panel-tabs {
  height: 27px;
  display: flex;
  align-items: center;
  background: #434343;
  color: #8f8f8f;
}
.ptab-on {
  width: 71px;
  height: 27px;
  background: #535353;
  color: #e0e0e0;
  font-weight: 600;
  text-align: center;
  line-height: 27px;
  font-size: 10px;
}
.ptab {
  width: 21px;
  text-align: center;
  flex: none;
}
.ptab-on + .ptab { margin-left: 7px; }
.ptab-more {
  margin-left: 18px;
  color: #cfcfcf;
  font-size: 12px;
}
.panel-body {
  display: flex;
}
.props {
  width: 207px;
  flex: none;
  margin-left: 9px;
  padding-top: 10px;
}
.ph {
  color: #c6c6c6;
  font-size: 9px;
}
.ph-ts { margin-top: 18px; }
.seg {
  margin-top: 8px;
  height: 18px;
  display: flex;
  box-sizing: border-box;
  border: 1px solid #676767;
  border-radius: 2px;
  text-align: center;
  font-size: 9px;
  line-height: 16px;
}
.seg span {
  flex: 1;
}
.seg .seg-on {
  flex: none;
  width: 101px;
  background: #333;
  color: #4f8fd0;
}
.style-dd {
  margin-top: 9px;
  height: 31px;
  box-sizing: border-box;
  padding-left: 4px;
  display: flex;
  align-items: center;
  background: #414141;
  border: 1px solid #5f5f5f;
  border-radius: 2px;
}
.ag {
  width: 23px;
  height: 23px;
  background: #fff;
  color: #222;
  text-align: center;
  font: 15px/22px "Liberation Serif", serif;
}
.style-name {
  flex: 1;
  margin-left: 5px;
  font-size: 9.300px;
}
.style-chev {
  width: 18px;
  height: 29px;
  border-left: 1px solid #5f5f5f;
  display: flex;
  align-items: center;
  justify-content: center;
}
.style-chev svg { width: 11px; height: 11px; }
.style-acts {
  margin-top: 7px;
  height: 18px;
  display: flex;
  align-items: center;
  color: #a9a9a9;
}
.pil {
  margin-left: 6px;
  font: 12px/18px "Liberation Sans", sans-serif;
}
.pil small { font-size: 8px; }
.act {
  width: 15px;
  height: 14px;
}
.a1 { margin-left: 108px; }
.pil.a2 { margin-left: 23px; }
.a3 { margin-left: 22px; width: 12px; height: 12px; }
.ph-app { margin-top: 19px; }
.row-fill {
  margin-top: 8px;
  height: 16px;
  display: flex;
  align-items: center;
}
.small-sw {
  width: 16px;
  height: 16px;
  font-size: 17px;
  line-height: 17px;
}
.lbl {
  margin-left: 10px;
  font-size: 9px;
}
.row-stroke {
  margin-top: 8px;
  height: 18px;
  display: flex;
  align-items: center;
}
.small-none {
  width: 15px;
  height: 15px;
}
.lbl.link {
  margin-left: 11px;
  width: 59px;
  flex: none;
  text-decoration: underline;
  white-space: pre;
}
.w64 { width: 64px; }
.dis {
  width: 53px;
  height: 18px;
  margin-left: 5px;
  background: #5f5f5f;
  display: flex;
  align-items: center;
  justify-content: flex-end;
  padding-right: 4px;
  box-sizing: border-box;
  color: #858585;
}
.dis svg { width: 11px; height: 11px; }
.ph-char { margin-top: 21px; }
.ph-char + .box { margin-top: 8px; }
.mt7 { margin-top: 7px; }
.char-grid {
  margin-top: 6px;
  display: grid;
  grid-template-columns: 22px 74px 37px 74px;
  row-gap: 6.100px;
}
.char-grid .ty {
  width: 20px;
}
.char-grid .ty-r {
  margin-left: 13px;
}
.lang-row {
  margin-top: 11px;
  height: 19px;
  display: flex;
  justify-content: space-between;
}
.box.lang { width: 97px; height: 19px; }
.opentype {
  width: 97px;
  box-sizing: border-box;
  border: 1px solid #686868;
  border-radius: 2px;
  text-align: center;
  font-size: 9px;
  line-height: 17px;
}
.case-row {
  margin-top: 22px;
  height: 18px;
  display: flex;
  font: 14px/18px "Liberation Serif", serif;
  color: #b6b6b6;
}
.case-row small { font-size: 10px; }
.case-row span { flex: none; width: 18px; letter-spacing: 1px; }
.case-row .c1 { margin-left: 2px; }
.case-row .c2 { margin-left: 14px; }
.case-row .c3 { margin-left: 28px; }
.case-row .c4 { margin-left: 13px; }
.case-row .c5 { margin-left: 25px; text-align: center; }
.case-row .c6 { margin-left: 15px; text-align: center; }
.more-row {
  margin-top: 8px;
  height: 18px;
  display: flex;
  justify-content: flex-end;
}
.more-b {
  width: 18px;
  height: 18px;
  margin-right: -5px;
  border-radius: 2px;
  background: #333;
  color: #c4c4c4;
  font-size: 7.500px;
  letter-spacing: -.5px;
  line-height: 18px;
  text-align: center;
}
.ph-para { margin-top: 14px; }
.p-aligns {
  margin-top: 7px;
  display: flex;
  gap: 3px;
}
.p-indent {
  margin-top: 12px;
  display: flex;
  gap: 16px;
  padding-left: 22px;
}
.indent-box {
  width: 74px;
  height: 18px;
  box-sizing: border-box;
  border: 1px solid #686868;
  background: #4a4a4a;
}
.scroll {
  width: 9px;
  margin-left: 10px;
  padding-top: 1px;
}
.scroll-up {
  width: 9px;
  height: 10px;
  transform: scaleY(-1);
  color: #888;
}
.scroll-thumb {
  display: block;
  height: 321px;
  margin-top: 1px;
  background: #6b6b6b;
  border-radius: 4px;
}

/* right dock */
.dock-col {
  width: 150px;
  flex: none;
  display: flex;
  flex-direction: column;
}
.dock-top {
  height: 12px;
  font-size: 6px;
  line-height: 12px;
  letter-spacing: -1px;
  text-align: right;
  padding-right: 5px;
  color: #bdbdbd;
}
.dock {
  flex: 1;
  background: #535353;
  border-left: 1px solid #454545;
}
.dock-group {
  box-sizing: border-box;
  padding: 9px 6px 0 5px;
  border-bottom: 1px solid #3f3f3f;
}
.g1 { height: 65px; }
.g2 { height: 65px; }
.g3 { height: 196px; }
.g4 { height: 117px; }
.d-item {
  height: 26.170px;
  display: flex;
  align-items: center;
  gap: 7px;
  padding-left: 4px;
  color: #d4d4d4;
  font-size: 10px;
  font-weight: 600;
  white-space: nowrap;
}
.d-item svg {
  width: 18px;
  height: 16px;
  flex: none;
  color: #bdbdbd;
}
.d-on {
  background: #333;
  height: 20px;
  margin: 3px 0;
}

.watermark {
  position: absolute;
  left: 1035px;
  top: 672px;
  width: 245px;
  height: 40px;
  box-sizing: border-box;
  padding-left: 14px;
  background: #fff;
  color: #000;
  font: bold 17.500px/38px "Liberation Sans", sans-serif;
}
```
